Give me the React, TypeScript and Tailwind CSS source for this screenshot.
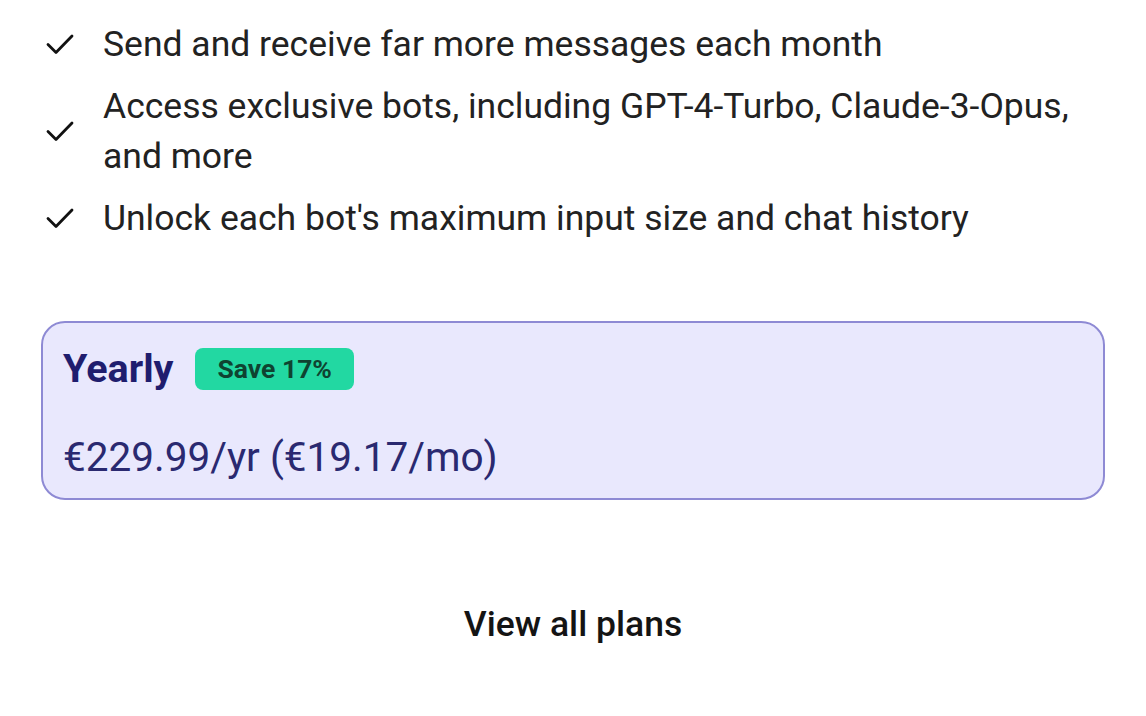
import React from 'react';

const features = [
  'Send and receive far more messages each month',
  'Access exclusive bots, including GPT-4-Turbo, Claude-3-Opus, and more',
  "Unlock each bot's maximum input size and chat history",
];

const Check: React.FC = () => (
  <svg width="30" height="24" viewBox="0 0 30 24" fill="none" className="shrink-0">
    <path d="M3 12.5 L11 20.5 L27 4" stroke="#111" strokeWidth="2.8" strokeLinecap="round" strokeLinejoin="round" />
  </svg>
);

const App: React.FC = () => {
  return (
    <div className="w-[1146px] h-[716px] bg-white overflow-hidden font-['Roboto',sans-serif]">
      <ul className="pt-[19px] pl-[45px] pr-[50px] flex flex-col gap-[12px]">
        {features.map((f) => (
          <li key={f} className="flex items-center gap-[28px]">
            <Check />
            <span className="text-[35.5px] leading-[50px] text-[#222]">{f}</span>
          </li>
        ))}
      </ul>

      <div className="mx-[41px] mt-[78px] h-[179px] rounded-[24px] border-2 border-[#8e8ad4] bg-[#e9e8fd] px-[20px] pt-[24px]">
        <div className="flex items-center gap-[22px]">
          <span className="text-[39.5px] leading-[44px] font-bold text-[#1f1d6e]">Yearly</span>
          <span className="h-[42px] px-[22px] rounded-[8px] bg-[#22d8a2] flex items-center text-[26.5px] font-bold text-[#0f4331]">
            Save 17%
          </span>
        </div>
        <div className="mt-[42px] text-[40.5px] leading-[48px] text-[#2a2970]">€229.99/yr (€19.17/mo)</div>
      </div>

      <div className="mt-[102px] text-center text-[35.5px] leading-[44px] font-medium text-[#141414]">View all plans</div>
    </div>
  );
};

export default App;
